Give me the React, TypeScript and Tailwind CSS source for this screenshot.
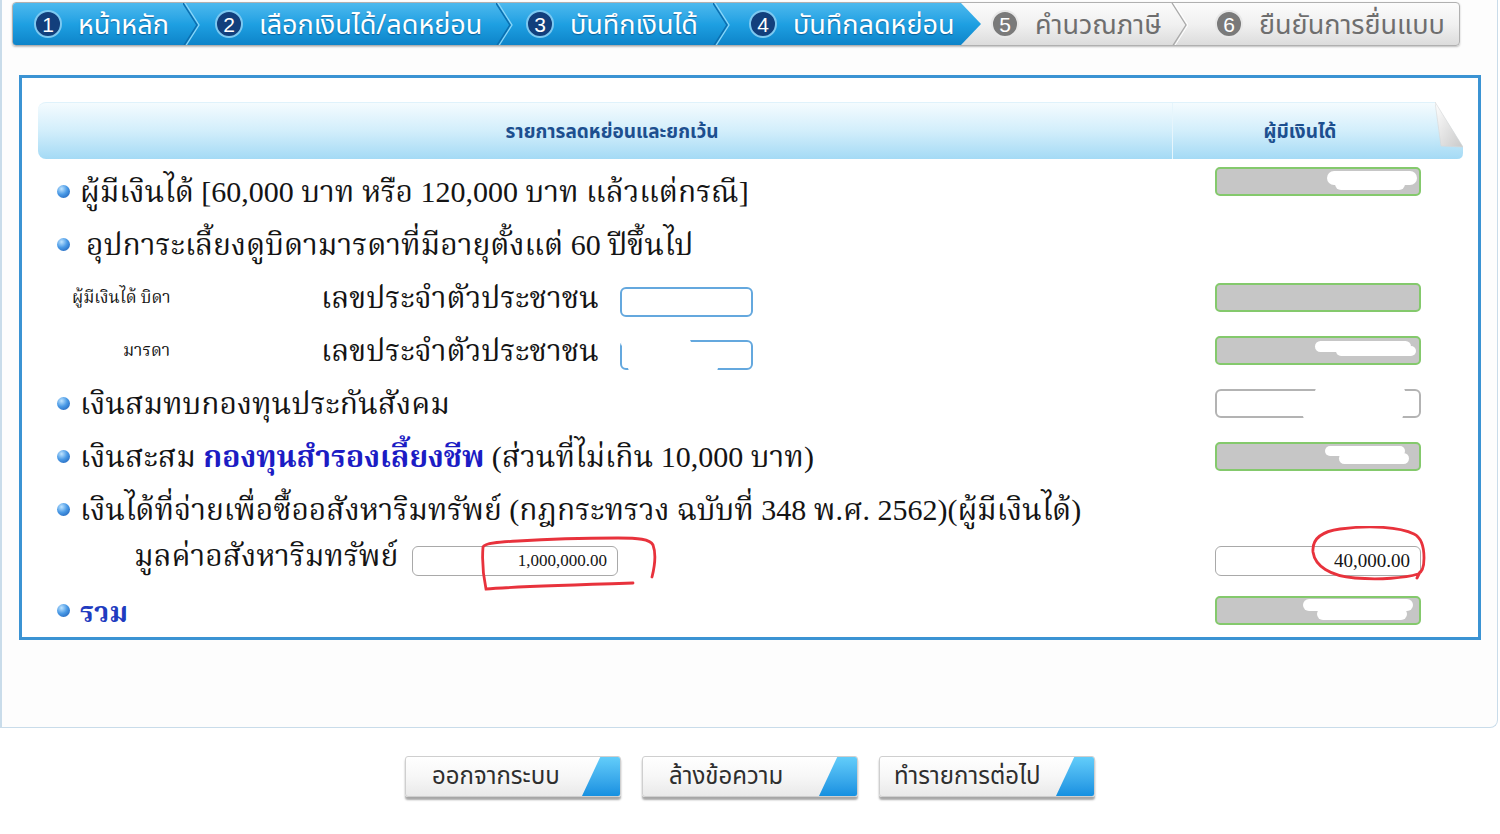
import React from "react";

const SERIF = "font-['Liberation_Serif','Noto_Serif_Thai','Noto_Sans_Thai',serif]";
const SANS = "font-['Noto_Sans_Thai','Loma','Tahoma','Liberation_Sans',sans-serif]";

function Circle({ n, gray }: { n: number; gray?: boolean }) {
  return (
    <div
      className={
        "flex h-[28px] w-[28px] shrink-0 items-center justify-center rounded-full border-[2px] text-[21px] leading-none text-white font-['Liberation_Sans',sans-serif] " +
        (gray ? "border-[#e8e8e8] bg-[#7a7a7a]" : "border-[#7cc8f0] bg-[#123f7c]")
      }
    >
      {n}
    </div>
  );
}

function Chevron({ gray }: { gray?: boolean }) {
  return (
    <svg width="17" height="44" viewBox="0 0 17 44" className="shrink-0">
      {gray ? (
        <>
          <polyline points="1,0 15,22 1,44" fill="none" stroke="#a9a9a9" strokeWidth="1.3" />
          <polyline points="3,0 17,22 3,44" fill="none" stroke="#ffffff" strokeWidth="1" />
        </>
      ) : (
        <>
          <polyline points="0,0 14,22 0,44" fill="none" stroke="#0b6fb0" strokeWidth="1.5" />
          <polyline points="2,0 16,22 2,44" fill="none" stroke="#8ad6f8" strokeWidth="1.3" />
        </>
      )}
    </svg>
  );
}

function Step({
  n,
  label,
  cls,
  gray,
}: {
  n: number;
  label: string;
  cls: string;
  gray?: boolean;
}) {
  return (
    <div className={"flex h-full shrink-0 items-center " + cls}>
      <Circle n={n} gray={gray} />
      <span
        className={
          SANS +
          " ml-[16px] translate-y-[1px] whitespace-nowrap text-[27px] leading-none " +
          (gray ? "text-[#6e6e6e]" : "text-white [text-shadow:0_1px_1px_rgba(0,40,90,0.5)]")
        }
      >
        {label}
      </span>
    </div>
  );
}

function StepBar() {
  return (
    <div className="relative ml-[10px] flex h-[44px] w-[1448px] overflow-hidden rounded-[4px] border border-[#b0b0b0] bg-gradient-to-b from-[#fbfbfb] via-[#f1f1f1] to-[#dcdcdc] shadow-[0_1px_2px_rgba(0,0,0,0.25)]">
      <div className="flex h-full w-[968px] shrink-0 bg-gradient-to-b from-[#4bb9ee] via-[#1ea0e2] to-[#0d84c9] [clip-path:polygon(0_0,calc(100%-20px)_0,100%_50%,calc(100%-20px)_100%,0_100%)]">
        <Step n={1} label="หน้าหลัก" cls="w-[170px] pl-[21px]" />
        <Chevron />
        <Step n={2} label="เลือกเงินได้/ลดหย่อน" cls="w-[296px] pl-[15px]" />
        <Chevron />
        <Step n={3} label="บันทึกเงินได้" cls="w-[200px] pl-[13px]" />
        <Chevron />
        <Step n={4} label="บันทึกลดหย่อน" cls="w-[251px] pl-[19px]" />
      </div>
      <Step n={5} label="คำนวณภาษี" cls="w-[190px] pl-[10px]" gray />
      <Chevron gray />
      <Step n={6} label="ยืนยันการยื่นแบบ" cls="w-[260px] pl-[27px]" gray />
    </div>
  );
}

function Bullet() {
  return (
    <span className="inline-block h-[13px] w-[13px] shrink-0 rounded-full bg-[radial-gradient(circle_at_35%_30%,#bfe4ff_0%,#4a9ae6_45%,#1656b0_100%)]" />
  );
}

function Blob({ cls }: { cls: string }) {
  return <span className={"absolute rounded-full bg-white " + cls} />;
}

function GrayField({ children, cls = "" }: { children?: React.ReactNode; cls?: string }) {
  return (
    <div
      className={
        "relative h-[29px] w-[206px] rounded-[5px] border-[2px] border-[#84c96c] bg-[#c6c6c6] " + cls
      }
    >
      {children}
    </div>
  );
}

function Row({
  left,
  right,
}: {
  left: React.ReactNode;
  right?: React.ReactNode;
}) {
  return (
    <div className="flex h-[53px] items-center">
      <div className="flex w-[1134px] shrink-0 items-center">{left}</div>
      <div className="ml-[43px] flex items-center">{right}</div>
    </div>
  );
}

function Header() {
  return (
    <div className="flex h-[57px] w-[1425px]">
      <div className="flex h-full w-[1397px] rounded-l-[8px] border-t border-[#dff2fb] bg-gradient-to-b from-[#f4fbfe] via-[#d2eefb] to-[#a4daf5]">
        <div
          className={
            SANS +
            " flex w-[1134px] translate-y-[2px] items-center justify-center pl-[14px] text-[19px] font-bold text-[#1d4f8f]"
          }
        >
          รายการลดหย่อนและยกเว้น
        </div>
        <div className="w-px bg-[#e6f5fc]" />
        <div
          className={
            SANS +
            " flex flex-1 translate-y-[2px] items-center justify-center pr-[8px] text-[19px] font-bold text-[#1d4f8f]"
          }
        >
          ผู้มีเงินได้
        </div>
      </div>
      <svg width="28" height="57" viewBox="0 0 28 57" className="shrink-0">
        <defs>
          <linearGradient id="hg" x1="0" y1="0" x2="0" y2="1">
            <stop offset="0" stopColor="#f4fbfe" />
            <stop offset="0.5" stopColor="#d2eefb" />
            <stop offset="1" stopColor="#a4daf5" />
          </linearGradient>
          <linearGradient id="fold" x1="0" y1="0" x2="1" y2="1">
            <stop offset="0" stopColor="#ffffff" />
            <stop offset="1" stopColor="#c9c9c9" />
          </linearGradient>
        </defs>
        <path d="M0,0 L0,57 L22,57 Q28,57 28,51 L28,45 Z" fill="url(#hg)" />
        <path d="M0,0 L6,44 L28,45 Z" fill="url(#fold)" stroke="#d6d6d6" strokeWidth="0.6" />
      </svg>
    </div>
  );
}

function Btn({ label, textCls }: { label: string; textCls: string }) {
  return (
    <div className="flex h-[41px] w-[216px] overflow-hidden rounded-[3px] border border-[#cfcfcf] bg-gradient-to-b from-[#ffffff] via-[#f7f7f7] to-[#e9e9e9] shadow-[0_3px_2px_rgba(0,0,0,0.35)]">
      <div
        className={
          SANS +
          " flex flex-1 items-center whitespace-nowrap text-[24px] text-[#2e2e2e] " +
          textCls
        }
      >
        {label}
      </div>
      <div className="h-full w-[38px] shrink-0 bg-gradient-to-b from-[#62cdfa] to-[#1590e0] [clip-path:polygon(48%_0,100%_0,100%_100%,0_100%)]" />
    </div>
  );
}

export default function App() {
  const textCls = SERIF + " text-[30px] leading-none text-[#141414] whitespace-nowrap";
  return (
    <div className="h-[834px] w-[1500px] bg-white">
      <div className="h-[728px] w-[1498px] rounded-br-[8px] border-b border-l-2 border-r border-[#c9dcea] bg-[#fdfdfd] pt-[2px]">
        <StepBar />
        <div className="ml-[17px] mt-[29px] h-[565px] w-[1462px] border-[3px] border-[#3b93d3] bg-white pl-[16px] pt-[24px]">
          <Header />
          <div className="pt-[6px]">
            <Row
              left={
                <div className="flex items-center pl-[19px]">
                  <Bullet />
                  <span className={textCls + " ml-[10px]"}>
                    ผู้มีเงินได้ [60,000 บาท หรือ 120,000 บาท แล้วแต่กรณี]
                  </span>
                </div>
              }
              right={
                <GrayField cls="-translate-y-[10px]">
                  <Blob cls="right-[2px] top-[2px] h-[14px] w-[90px]" />
                  <Blob cls="right-[14px] top-[9px] h-[12px] w-[70px]" />
                </GrayField>
              }
            />
            <Row
              left={
                <div className="flex items-center pl-[19px]">
                  <Bullet />
                  <span className={textCls + " ml-[16px]"}>
                    อุปการะเลี้ยงดูบิดามารดาที่มีอายุตั้งแต่ 60 ปีขึ้นไป
                  </span>
                </div>
              }
            />
            <Row
              left={
                <div className="flex items-center pl-[34px]">
                  <span className={SERIF + " w-[249px] whitespace-nowrap text-[17px] text-[#141414]"}>
                    ผู้มีเงินได้ บิดา
                  </span>
                  <span className={textCls + " w-[299px]"}>เลขประจำตัวประชาชน</span>
                  <div className="h-[30px] w-[133px] translate-y-[4px] rounded-[6px] border-[2px] border-[#64a8de] bg-white" />
                </div>
              }
              right={<GrayField />}
            />
            <Row
              left={
                <div className="flex items-center pl-[34px]">
                  <span className={SERIF + " w-[249px] whitespace-nowrap pl-[51px] text-[17px] text-[#141414]"}>
                    มารดา
                  </span>
                  <span className={textCls + " w-[299px]"}>เลขประจำตัวประชาชน</span>
                  <div className="relative h-[30px] w-[133px] translate-y-[4px] rounded-[6px] border-[2px] border-[#64a8de] bg-white">
                    <Blob cls="-left-[1px] -top-[3px] h-[8px] w-[70px]" />
                    <Blob cls="left-[6px] -bottom-[3px] h-[7px] w-[90px]" />
                  </div>
                </div>
              }
              right={
                <GrayField>
                  <Blob cls="right-[8px] top-[3px] h-[11px] w-[96px]" />
                  <Blob cls="right-[3px] top-[8px] h-[10px] w-[80px]" />
                </GrayField>
              }
            />
            <Row
              left={
                <div className="flex items-center pl-[19px]">
                  <Bullet />
                  <span className={textCls + " ml-[10px]"}>เงินสมทบกองทุนประกันสังคม</span>
                </div>
              }
              right={
                <div className="relative h-[29px] w-[206px] rounded-[6px] border-[2px] border-[#b3b3b3] bg-white">
                  <Blob cls="right-[14px] -top-[3px] h-[7px] w-[90px]" />
                  <Blob cls="right-[16px] -bottom-[3px] h-[7px] w-[100px]" />
                </div>
              }
            />
            <Row
              left={
                <div className="flex items-center pl-[19px]">
                  <Bullet />
                  <span className={textCls + " ml-[10px]"}>
                    เงินสะสม{" "}
                    <span className="font-bold text-[#1c1cc4]">กองทุนสำรองเลี้ยงชีพ</span>{" "}
                    (ส่วนที่ไม่เกิน 10,000 บาท)
                  </span>
                </div>
              }
              right={
                <GrayField>
                  <Blob cls="right-[14px] top-[2px] h-[10px] w-[80px]" />
                  <Blob cls="right-[10px] top-[9px] h-[11px] w-[70px]" />
                </GrayField>
              }
            />
            <Row
              left={
                <div className="flex items-center pl-[19px]">
                  <Bullet />
                  <span className={textCls + " ml-[10px]"}>
                    เงินได้ที่จ่ายเพื่อซื้ออสังหาริมทรัพย์ (กฎกระทรวง ฉบับที่ 348 พ.ศ. 2562)(ผู้มีเงินได้)
                  </span>
                </div>
              }
            />
            <div className="relative flex h-[48px] items-center">
              <div className="flex w-[1134px] shrink-0 items-center pl-[96px]">
                <span className={textCls + " w-[278px] -translate-y-[4px]"}>มูลค่าอสังหาริมทรัพย์</span>
                <div
                  className={
                    SERIF +
                    " flex h-[30px] w-[206px] translate-y-[1px] items-center justify-end rounded-[6px] border-[1.5px] border-[#a9a9a9] bg-white pr-[10px] text-[17px] text-[#141414]"
                  }
                >
                  1,000,000.00
                </div>
              </div>
              <div className="ml-[43px] flex items-center">
                <div
                  className={
                    SERIF +
                    " flex h-[30px] w-[206px] translate-y-[1px] items-center justify-end rounded-[6px] border-[1.5px] border-[#a9a9a9] bg-white pr-[10px] text-[19px] text-[#141414]"
                  }
                >
                  40,000.00
                </div>
              </div>
              <svg
                className="pointer-events-none absolute left-[440px] top-[-1px]"
                width="184"
                height="60"
                viewBox="0 0 184 60"
              >
                <path
                  d="M174,42 C177,30 178,18 175,10 C172,4 160,3 140,3 C110,3 70,4 40,6 C20,7 7,8 5,12 C4,25 5,40 8,54 C30,52 90,50 155,48"
                  fill="none"
                  stroke="#e8323c"
                  strokeWidth="2.8"
                  strokeLinecap="round"
                />
              </svg>
              <svg
                className="pointer-events-none absolute left-[1272px] top-[-10px]"
                width="120"
                height="60"
                viewBox="0 0 120 60"
              >
                <path
                  d="M104,8 C90,1 60,-1 30,3 C8,6 2,15 3,26 C5,40 20,50 45,52 C70,54 95,52 108,48 C113,46 114,40 114,32 C114,22 112,12 104,8 M110,46 L107,52"
                  fill="none"
                  stroke="#e8323c"
                  strokeWidth="2.8"
                  strokeLinecap="round"
                />
              </svg>
            </div>
            <Row
              left={
                <div className="flex items-center pl-[19px]">
                  <Bullet />
                  <span className={SERIF + " ml-[10px] translate-y-[2px] text-[28px] font-bold leading-none text-[#1f3cc0]"}>
                    รวม
                  </span>
                </div>
              }
              right={
                <GrayField>
                  <Blob cls="right-[6px] top-[1px] h-[12px] w-[110px]" />
                  <Blob cls="right-[12px] top-[10px] h-[12px] w-[90px]" />
                </GrayField>
              }
            />
          </div>
        </div>
      </div>
      <div className="mt-[28px] flex justify-center gap-[21px]">
        <Btn label="ออกจากระบบ" textCls="pl-[26px]" />
        <Btn label="ล้างข้อความ" textCls="pl-[26px]" />
        <Btn label="ทำรายการต่อไป" textCls="pl-[14px]" />
      </div>
    </div>
  );
}
